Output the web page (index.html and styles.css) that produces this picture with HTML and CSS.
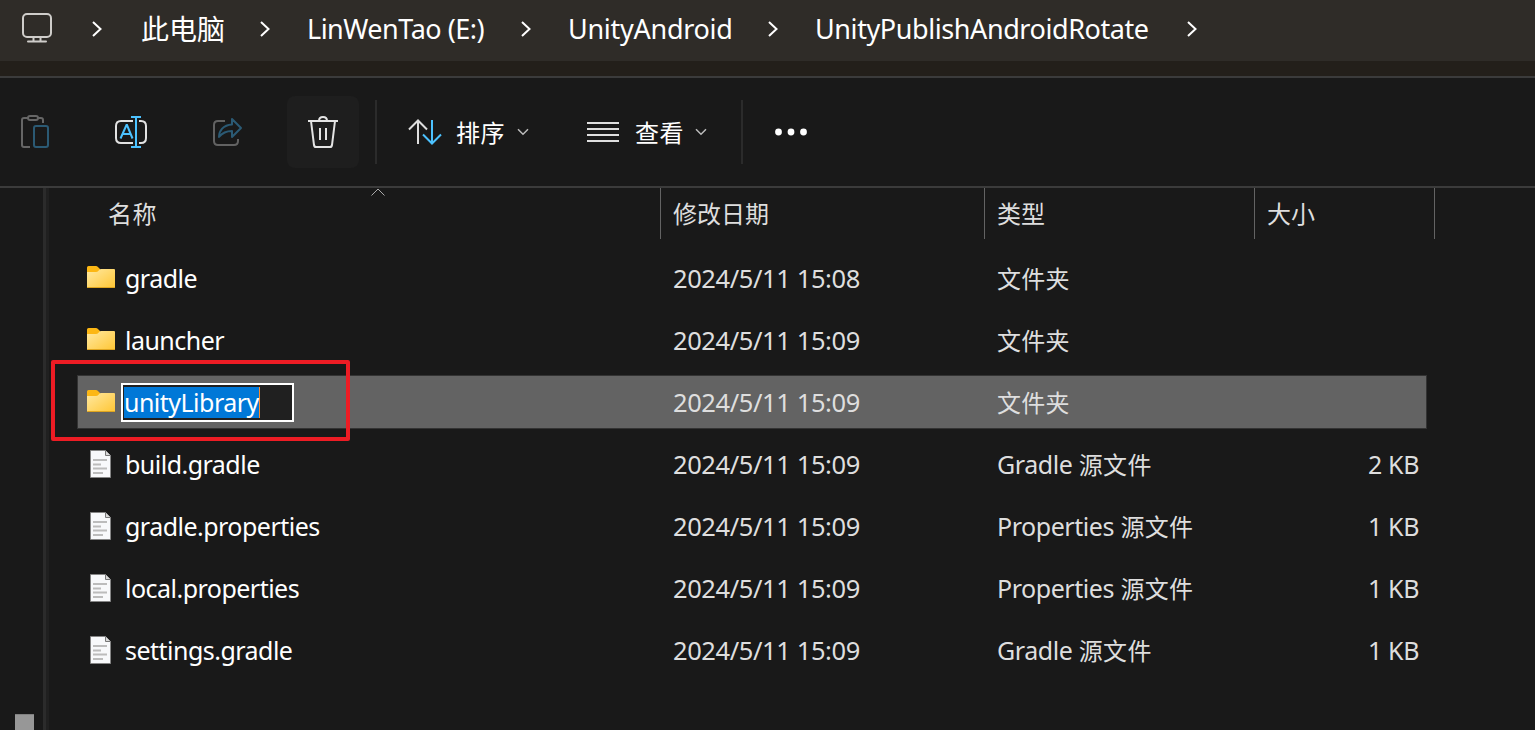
FILE: index.html
```html
<!DOCTYPE html>
<html lang="zh-CN">
<head>
<meta charset="utf-8">
<title>UnityPublishAndroidRotate</title>
<link rel="stylesheet" href="styles.css">
</head>
<body>
<svg class="defs" width="0" height="0">
  <defs>
    <linearGradient id="fold" x1="0" y1="0" x2="1" y2="1"><stop offset="0" stop-color="#ffe9a2"/><stop offset="1" stop-color="#ffc634"/></linearGradient>
    <symbol id="folder" viewBox="0 0 28 22"><path d="M0 1.500Q0 0 1.500 0H9q1 0 1.700.8L13 3v5H0z" fill="#fcb714"/><path d="M0 6h9q1.500 0 2.300-1l1-1.200Q13 3 14 3h13q1 0 1 1v17q0 1-1 1H1q-1 0-1-1z" fill="url(#fold)"/><path d="M.3 21.500h27.400" stroke="#dfa51f"/></symbol>
    <symbol id="doc" viewBox="0 0 21 28"><path d="M.5.5h15l5 5v22H.5z" fill="#f8f9fb" stroke="#858585"/><path d="M15.500.5v5h5" fill="#d9d9d9" stroke="#777"/><path d="M3 10h14M3 14.500h8M3 18.500h14M3 23h10" stroke="#bcbcbc" stroke-width="2"/></symbol>
    <symbol id="chev" viewBox="0 0 10 16"><path d="M1 1l7.500 7L1 15" fill="none" stroke="#fff" stroke-width="2"/></symbol>
    <symbol id="down" viewBox="0 0 12 8"><path d="M1 1.200l5 5 5-5" fill="none" stroke="#bcbcbc" stroke-width="1.500"/></symbol>
  </defs>
</svg>
<header class="address">
  <nav class="crumbs">
    <svg class="pc" viewBox="0 0 30 30"><rect x="1" y="1" width="28" height="23" rx="4" fill="none" stroke="#cfcdca" stroke-width="2"/><path d="M11.500 24v4M18.500 24v4M6 28.500h18" fill="none" stroke="#cfcdca" stroke-width="2" stroke-linecap="round"/></svg>
    <svg class="sep"><use href="#chev"/></svg>
    <span class="crumb root">此电脑</span>
    <svg class="sep"><use href="#chev"/></svg>
    <span class="crumb drive">LinWenTao (E:)</span>
    <svg class="sep"><use href="#chev"/></svg>
    <span class="crumb parent">UnityAndroid</span>
    <svg class="sep"><use href="#chev"/></svg>
    <span class="crumb current">UnityPublishAndroidRotate</span>
    <svg class="sep"><use href="#chev"/></svg>
  </nav>
</header>
<div class="toolbar">
  <div class="tool paste"><svg width="30" height="34" viewBox="0 0 30 34" fill="none" stroke-width="2"><path d="M8 3H4Q2 3 2 5v25q0 2 2 2h6M17 3h4q2 0 2 2v3" stroke="#666"/><rect x="8" y="1" width="10" height="4" rx="2" stroke="#666"/><rect x="14" y="11" width="14" height="21" rx="2" stroke="#2b5a74"/></svg></div>
  <div class="tool"><svg width="34" height="34" viewBox="0 0 34 34" fill="none" stroke-width="2"><path d="M19 6H7Q2 6 2 11v12q0 5 5 5h12M25 6h2q5 0 5 5v12q0 5-5 5h-2" stroke="#e2e2e2"/><path d="M6.500 23.500l6-13.500h.5l5.500 13.500M8.500 19h8" stroke="#4cc2ff"/><path d="M22 2v30M17 2h10M17 32h10" stroke="#4cc2ff"/></svg></div>
  <div class="tool"><svg width="32" height="32" viewBox="0 0 32 32" fill="none" stroke-width="2" stroke-linejoin="round"><path d="M14 5H7Q3 5 3 9v16q0 4 4 4h16q4 0 4-4v-2" stroke="#626262"/><path d="M21 3v5.500C12 9 8 15 8 21c3.500-4.500 7-6 13-6v6l9-9z" stroke="#2b5a74"/></svg></div>
  <div class="tool remove"><svg width="32" height="34" viewBox="0 0 32 34" fill="none" stroke="#e4e4e4" stroke-width="2"><path d="M1 6h30M12 6q0-4 4-4t4 4M4 6l3 24q.3 2 2 2h14q1.700 0 2-2l3-24M13 13v12M19 13v12"/></svg></div>
  <div class="rule"></div>
  <div class="menu sort"><svg width="34" height="26" viewBox="0 0 34 26" fill="none" stroke-width="2"><path d="M10 25V2M1 10.500L10 1.500l9 9" stroke="#dedede"/><path d="M24 1v23M15 15.500l9 9 9-9" stroke="#4cc2ff"/></svg><span>排序</span><svg class="down"><use href="#down"/></svg></div>
  <div class="menu view"><svg width="32" height="22" viewBox="0 0 32 22"><path d="M0 2h32M0 8h32M0 14h32M0 20h32" stroke="#dfdfdf" stroke-width="2"/></svg><span>查看</span><svg class="down"><use href="#down"/></svg></div>
  <div class="rule last"></div>
  <svg class="more" viewBox="0 0 34 8" fill="#fff"><circle cx="4.500" cy="4" r="3.400"/><circle cx="17" cy="4" r="3.400"/><circle cx="29.500" cy="4" r="3.400"/></svg>
</div>
<main class="body">
  <aside class="tree"><div class="thumb"></div></aside>
  <div class="splitter"></div>
  <section class="list">
    <div class="head">
      <div class="col first">名称<svg class="asc" viewBox="0 0 14 8"><path d="M.5 7.500L7 1l6.500 6.500" fill="none" stroke="#aaa"/></svg></div>
      <div class="col">修改日期</div><div class="col">类型</div><div class="col">大小</div>
    </div>
    <div class="rows">
      <div class="row"><svg class="folder"><use href="#folder"/></svg><span class="name">gradle</span><span class="date">2024/5/11 15:08</span><span class="type">文件夹</span><span class="size"></span></div>
      <div class="row"><svg class="folder"><use href="#folder"/></svg><span class="name">launcher</span><span class="date">2024/5/11 15:09</span><span class="type">文件夹</span><span class="size"></span></div>
      <div class="row selected"><svg class="folder"><use href="#folder"/></svg><span class="edit"><span class="marked">unityLibrary</span></span><span class="date">2024/5/11 15:09</span><span class="type">文件夹</span><span class="size"></span><div class="callout"></div></div>
      <div class="row"><svg class="doc"><use href="#doc"/></svg><span class="name">build.gradle</span><span class="date">2024/5/11 15:09</span><span class="type"><span class="latin">Gradle</span> 源文件</span><span class="size">2 KB</span></div>
      <div class="row"><svg class="doc"><use href="#doc"/></svg><span class="name">gradle.properties</span><span class="date">2024/5/11 15:09</span><span class="type"><span class="latin">Properties</span> 源文件</span><span class="size">1 KB</span></div>
      <div class="row"><svg class="doc"><use href="#doc"/></svg><span class="name">local.properties</span><span class="date">2024/5/11 15:09</span><span class="type"><span class="latin">Properties</span> 源文件</span><span class="size">1 KB</span></div>
      <div class="row"><svg class="doc"><use href="#doc"/></svg><span class="name">settings.gradle</span><span class="date">2024/5/11 15:09</span><span class="type"><span class="latin">Gradle</span> 源文件</span><span class="size">1 KB</span></div>
    </div>
  </section>
</main>
</body>
</html>
```
FILE: styles.css
```css
* { box-sizing: border-box; }
body {
  margin: 0;
  height: 730px;
  overflow: hidden;
  display: flex;
  flex-direction: column;
  background: #191919;
  color: #fff;
  font: 24px/32px "Noto Sans", "Noto Sans CJK SC", sans-serif;
  white-space: nowrap;
}
svg { display: block; flex: none; }
.defs { position: absolute; }
.address { height: 78px; background: #231f1a; border-bottom: 2px solid #3b3b3b; flex: none; }
.crumbs {
  height: 61px;
  padding: 0 0 3px 22px;
  background: #2f2c28;
  display: grid;
  grid-template-columns: 70px 49px 119px 47px 214px 47px 200px 47px 372px 10px;
  align-items: center;
  font-size: 27px;
}
.root { font-size: 28px; }
.drive { letter-spacing: -.5px; }
.parent { letter-spacing: -.28px; }
.current { letter-spacing: -.42px; }
.pc { width: 30px; height: 30px; margin-top: -2px; }
.sep { width: 10px; height: 16px; }
.toolbar { height: 110px; border-bottom: 2px solid #3b3b3b; display: flex; align-items: center; flex: none; }
.tool { width: 72px; height: 72px; margin-right: 24px; display: flex; align-items: center; justify-content: center; border-radius: 8px; }
.paste { width: 71px; }
.paste svg { margin-right: 2px; }
.remove { background: #1e1e1e; margin-right: 16px; }
.rule { width: 2px; height: 64px; background: #2b2b2b; }
.menu { display: flex; align-items: center; }
.menu span { padding-top: 2px; width: 49px; letter-spacing: .4px; }
.sort { margin-left: 31px; width: 179px; }
.sort span { margin-left: 14px; }
.sort .down { margin-left: 12px; }
.view span { margin-left: 16px; }
.down { width: 12px; height: 8px; margin-left: 11px; }
.last { margin-left: 34px; }
.more { width: 34px; height: 8px; margin-left: 31px; }
.body { flex: 1; display: flex; min-height: 0; }
.tree { width: 43px; display: flex; align-items: flex-end; padding-left: 15px; }
.thumb { width: 19px; height: 16px; background: #979797; border-top: 1px solid #808080; }
.splitter { width: 6px; background: #202020; border-left: 3px solid #2b2b2b; }
.list { flex: 1; }
.head { height: 51px; display: grid; grid-template-columns: 612px 324px 270px 180px; color: #dedede; }
.col { border-right: 1px solid #636363; padding: 10px 0 0 12px; position: relative; }
.first { padding-left: 59px; letter-spacing: .4px; }
.asc { position: absolute; left: 322px; top: 0; width: 14px; height: 8px; }
.rows { padding: 13px 0 0 29px; }
.row {
  width: 1348px;
  height: 52px;
  margin-bottom: 10px;
  padding-left: 9px;
  display: grid;
  grid-template-columns: 38px 548px 324px 270px 1fr;
  align-items: center;
  position: relative;
}
.folder { width: 28px; height: 22px; margin-top: -2px; }
.doc { width: 21px; height: 28px; margin: -1px 0 0 3px; }
.date, .type, .size { color: #dedede; }
.name, .date, .size { padding-bottom: 1px; }
.type { padding-top: 1px; }
.name { font-size: 25px; letter-spacing: -.52px; }
.date { font-size: 25.5px; letter-spacing: -.4px; }
.type { letter-spacing: .3px; }
.latin { font-size: 25px; letter-spacing: -.45px; }
.size { font-size: 25px; letter-spacing: -.4px; text-align: right; padding-right: 7px; }
.selected { background: #636363; outline: 1px solid #333; outline-offset: -.5px; }
.edit { width: 173px; height: 39px; margin-left: -4px; border: 2px solid #fff; background: #202020; padding: 2px 1px; }
.marked { display: block; width: 136px; height: 31px; background: #0078d7; border-right: 1px solid #ff8a28; font-size: 25px; letter-spacing: -.52px; line-height: 30px; }
.callout { position: absolute; left: -27px; top: -16px; width: 299px; height: 81px; border: 4px solid #ed1c24; border-radius: 2px; }
```
